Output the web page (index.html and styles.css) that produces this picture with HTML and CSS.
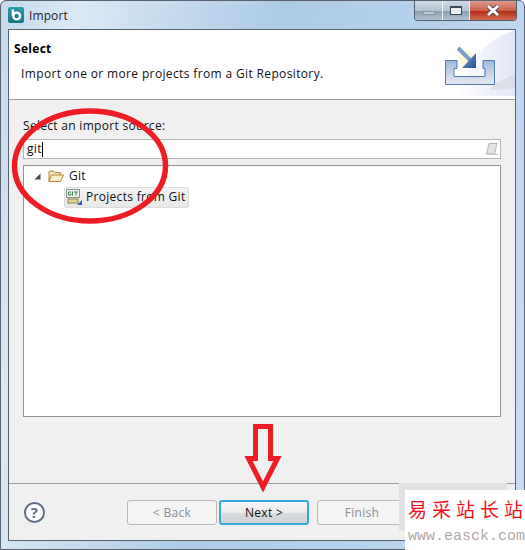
FILE: index.html
```html
<!DOCTYPE html>
<html lang="en">

<head>
  <meta charset="UTF-8">
  <meta name="viewport" content="width=device-width, initial-scale=1.0">
  <title>Import</title>
  <link rel="stylesheet" href="styles.css">
</head>

<body>
  <div class="window">
    <!-- Title bar -->
    <div class="titlebar">
      <svg class="app-icon" width="16" height="16" viewBox="0 0 16 16">
        <defs>
          <linearGradient id="appbg" x1="0" y1="0" x2="0" y2="1">
            <stop offset="0" stop-color="#2f9fae" />
            <stop offset="1" stop-color="#127482" />
          </linearGradient>
        </defs>
        <rect width="16" height="16" rx="2" fill="url(#appbg)" />
        <circle cx="8.7" cy="9" r="3.4" fill="none" stroke="#fff" stroke-width="2.4" />
        <path d="M4.9 2.5 V9" stroke="#fff" stroke-width="2.4" />
      </svg>
      <span class="title">Import</span>
      <div class="controls">
        <div class="ctl ctl-min"><span class="min-glyph"></span></div>
        <div class="ctl ctl-max"><span class="max-glyph"></span></div>
        <div class="ctl ctl-close">
          <svg width="14" height="11" viewBox="0 0 14 11">
            <path d="M2 1 L12 10 M12 1 L2 10" stroke="#4a4a4a" stroke-width="4.4" />
            <path d="M2 1 L12 10 M12 1 L2 10" stroke="#fff" stroke-width="2.8" />
          </svg>
        </div>
      </div>
    </div>

    <div class="client">
      <!-- Wizard header -->
      <div class="header">
        <div class="header-text">
          <h1>Select</h1>
          <p>Import one or more projects from a Git Repository.</p>
        </div>
        <svg class="banner" width="75" height="69" viewBox="0 0 75 69">
          <defs>
            <linearGradient id="sweep" x1="0" y1="0" x2="1" y2="0">
              <stop offset="0" stop-color="#fff" />
              <stop offset="1" stop-color="#e2e6f5" />
            </linearGradient>
            <linearGradient id="tray" x1="0" y1="0" x2="0" y2="1">
              <stop offset="0" stop-color="#9db9dc" />
              <stop offset="0.6" stop-color="#ccd7e8" />
              <stop offset="1" stop-color="#e6e9f2" />
            </linearGradient>
            <linearGradient id="head" x1="0" y1="0" x2="1" y2="1">
              <stop offset="0" stop-color="#7fa3d0" />
              <stop offset="1" stop-color="#24508f" />
            </linearGradient>
          </defs>
          <path d="M75 0 Q30 14 18 66 H75 Z" fill="url(#sweep)" />
          <path d="M54 54 L75 44 V58 L50 60 Z" fill="#d4d6de" opacity=".6" />
          <circle cx="26" cy="28" r="8" fill="#fbf8dc" />
          <path d="M5.5 30.5 H17 V38.5 H14 V46.5 H45 V38.5 H43 V30.5 H54.5 V54.5 H5.5 Z" fill="url(#tray)" stroke="#4f78ad" />
          <path d="M18 18 L31 31" stroke="#7c9fcc" stroke-width="4" />
          <path d="M36 23 V38 H22 Z" fill="url(#head)" />
        </svg>
      </div>

      <!-- Import source -->
      <div class="body">
        <label class="source-label" for="filter">Select an import source:</label>
        <div class="filter">
          <span class="filter-value">git</span><span class="caret"></span>
          <svg class="eraser" width="14" height="14" viewBox="0 0 14 14">
            <path d="M4 1.5 H12 L9.5 12 H1.5 Z" fill="#e4e4e2" stroke="#b5b5b0" />
            <path d="M2 12.5 H13" stroke="#c4c4c0" />
          </svg>
        </div>
        <div class="tree">
          <div class="tree-row">
            <svg class="twisty" width="7" height="7" viewBox="0 0 7 7">
              <path d="M6.5 0.5 V6.5 H0.5 Z" fill="#444" />
            </svg>
            <svg class="folder" width="16" height="13" viewBox="0 0 16 13">
              <path d="M1 11.5 V2 Q1 1 2 1 H5.5 L7 2.5 H12.5 V5" fill="#f7e3b0" stroke="#b5843c" />
              <path d="M1 11.5 L3.5 5 H15.5 L12.5 11.5 Z" fill="#fbeec8" stroke="#b5843c" />
            </svg>
            <span class="row-text">Git</span>
          </div>
          <div class="tree-row tree-child">
            <div class="selected">
              <svg class="git-icon" width="16" height="16" viewBox="0 0 16 16">
                <rect x="0.5" y="0.5" width="13" height="8" fill="#eef2ee" stroke="#8a8f8a" />
                <path d="M2.5 3 H5 M2.5 3 V6 H5 V4.5 M6.5 2.5 V6.5 M8 3 H12 M10 3 V6.5" stroke="#3f7f4f" fill="none" />
                <rect x="2" y="10" width="10" height="4" fill="#e4d98a" stroke="#8a8350" />
                <path d="M11 16 L16 11 V16 Z" fill="#2e62a8" />
              </svg>
              <span class="row-text">Projects from Git</span>
            </div>
          </div>
        </div>
      </div>

      <!-- Buttons -->
      <div class="footer">
        <div class="help">?</div>
        <div class="buttons">
          <button class="btn" type="button" disabled>&lt; Back</button>
          <button class="btn btn-default" type="button">Next &gt;</button>
          <button class="btn btn-finish" type="button" disabled>Finish</button>
        </div>
      </div>
    </div>
  </div>

  <!-- Red marks drawn over the screenshot -->
  <svg class="marks" width="525" height="550" viewBox="0 0 525 550">
    <ellipse cx="90" cy="166" rx="75.5" ry="55" fill="none" stroke="#ee1c25" stroke-width="5.5" />
    <path d="M255.5 426.5 H270.5 V458.5 H277.5 L263 487 L248.5 458.5 H255.5 Z" fill="none" stroke="#ee1c25" stroke-width="5" />
  </svg>

  <!-- Watermark -->
  <div class="wm-shade"></div>
  <div class="watermark">
    <div class="wm-name">易采站长站</div>
    <div class="wm-url">www.easck.com</div>
  </div>
</body>

</html>
```

FILE: styles.css
```css
html,
body {
  margin: 0;
  padding: 0;
}

body {
  position: relative;
  width: 525px;
  height: 550px;
  overflow: hidden;
  font-family: "Open Sans", "Noto Sans", sans-serif;
  font-size: 12px;
  letter-spacing: 0.3px;
  color: #111;
  background: #fff;
}

.window {
  box-sizing: border-box;
  width: 525px;
  height: 550px;
  display: flex;
  flex-direction: column;
  padding: 0 8px 8px 7px;
  border: 1px solid #5a6470;
  border-radius: 6px 6px 0 0;
  background: linear-gradient(100deg, #c2d8ec 0%, #dbe9f5 12%, #aecbe6 45%, #b5d0ea 70%, #c9def0 100%);
}

.titlebar {
  height: 28px;
  flex: none;
  display: flex;
  align-items: center;
}

.title {
  margin-left: 5px;
  letter-spacing: 0.1px;
  color: #222;
}

.controls {
  margin-left: auto;
  margin-right: -1px;
  align-self: flex-start;
  display: flex;
  height: 19px;
  border: 1px solid #56616e;
  border-top: none;
  border-radius: 0 0 4px 4px;
  overflow: hidden;
}

.ctl {
  height: 19px;
  display: flex;
  align-items: center;
  justify-content: center;
  background: linear-gradient(#cdd9e5, #b4c3d2 50%, #8a9db0 52%, #b0c2d3);
}

.ctl-min {
  width: 27px;
  border-right: 1px solid #eef3f8;
}

.ctl-max {
  width: 26px;
  border-right: 1px solid #eef3f8;
}

.ctl-close {
  width: 46px;
  background: linear-gradient(#dd9a8c, #c9604c 50%, #b32b14 52%, #cf6a50);
}

.min-glyph {
  width: 10px;
  height: 2px;
  margin-top: 5px;
  background: #c4ccd4;
  border: 1px solid #8b98a5;
}

.max-glyph {
  box-sizing: border-box;
  width: 12px;
  height: 9px;
  background: #e6edf3;
  border: 1px solid #3f4a55;
  border-top-width: 2px;
}

.client {
  flex: 1;
  display: flex;
  flex-direction: column;
  border: 1px solid #59636e;
  background: #f0f0f0;
  min-height: 0;
}

.header {
  height: 69px;
  flex: none;
  display: flex;
  justify-content: space-between;
  background: #fff;
  border-bottom: 1px solid #9a9a9a;
}

.header-text {
  padding: 10px 0 0 5px;
}

.header h1 {
  margin: 0;
  font-size: 12px;
  line-height: 17px;
  font-weight: bold;
  color: #000;
}

.header p {
  margin: 8px 0 0 7px;
  line-height: 17px;
  letter-spacing: 0.36px;
}

.body {
  height: 384px;
  flex: none;
  box-sizing: border-box;
  padding: 17px 14px 0;
  display: flex;
  flex-direction: column;
  border-bottom: 1px solid #9a9a9a;
}

.source-label {
  line-height: 17px;
  margin-bottom: 5px;
}

.filter {
  box-sizing: border-box;
  height: 20px;
  display: flex;
  align-items: center;
  padding-left: 3px;
  background: #fff;
  border: 1px solid #b4b4b4;
}

.filter-value {
  margin-top: -2px;
}

.caret {
  width: 1px;
  height: 15px;
  background: #000;
}

.eraser {
  margin-left: auto;
  margin-right: 1px;
}

.tree {
  box-sizing: border-box;
  height: 252px;
  margin-top: 6px;
  background: #fff;
  border: 1px solid #8f9499;
}

.tree-row {
  height: 20px;
  display: flex;
  align-items: center;
}

.row-text {
  margin-top: -2px;
}

.twisty {
  margin-left: 10px;
}

.folder {
  margin-left: 7px;
  margin-right: 5px;
}

.tree-child {
  margin-top: 1px;
  padding-left: 40px;
}

.selected {
  height: 19px;
  display: flex;
  align-items: center;
  gap: 4px;
  padding: 0 2px 0 1px;
  background: linear-gradient(#f4f4f4, #e8e8e8);
  border: 1px solid #dcdcdc;
  border-radius: 2px;
}

.footer {
  flex: 1;
  display: flex;
  align-items: center;
  padding: 1px 0 0 15px;
}

.help {
  box-sizing: border-box;
  width: 21px;
  height: 21px;
  border: 2px solid #5f6f86;
  border-radius: 50%;
  background: #fff;
  color: #5f6f86;
  font-size: 15px;
  font-weight: bold;
  line-height: 17px;
  text-align: center;
}

.buttons {
  margin-left: 82px;
  display: flex;
  gap: 2px;
}

.btn {
  box-sizing: border-box;
  width: 90px;
  height: 25px;
  padding: 0;
  font: inherit;
  letter-spacing: inherit;
  color: #111;
  background: linear-gradient(#f6f6f6, #ebebeb 50%, #d8dcde 52%, #cfd3d6);
  border: 1px solid #707070;
  border-radius: 3px;
}

.btn:disabled {
  color: #8a8f96;
  background: #f4f4f4;
  border-color: #b8b8b8;
}

.btn-default {
  border: 2px solid #35a8dc;
}

.btn-finish {
  margin-left: 6px;
}

.marks {
  position: absolute;
  left: 0;
  top: 0;
  pointer-events: none;
}

.wm-shade {
  position: absolute;
  left: 399px;
  top: 483px;
  width: 108px;
  height: 48px;
  background: #e2e2e2;
}

.watermark {
  position: absolute;
  left: 405px;
  top: 490px;
  width: 120px;
  height: 60px;
  background: #fff;
}

.wm-name {
  width: 115px;
  margin-top: 4px;
  margin-left: 3px;
  font-family: "Noto Sans CJK SC", sans-serif;
  font-size: 19px;
  line-height: 30px;
  letter-spacing: 0;
  text-align: justify;
  text-align-last: justify;
  color: #f01020;
}

.wm-url {
  margin-top: 4px;
  padding-left: 3px;
  font-family: "Liberation Mono", monospace;
  font-size: 15px;
  line-height: 17px;
  letter-spacing: 0;
  color: #b4a8a8;
  white-space: nowrap;
}
```
